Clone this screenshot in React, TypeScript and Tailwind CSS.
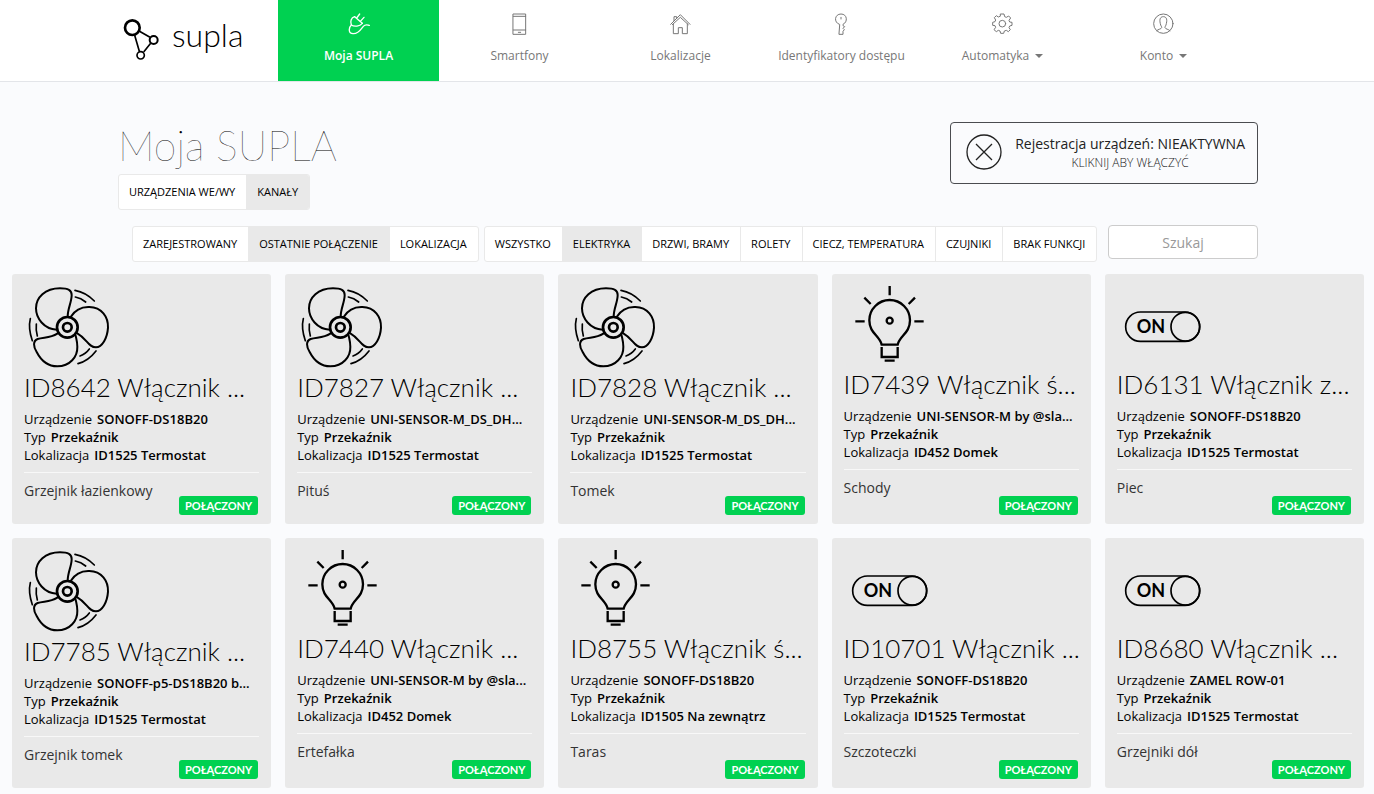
import type { ReactNode } from "react";
import clsx from "clsx";

type Glyph = "fan" | "bulb" | "toggle";

interface Channel {
  title: string;
  device: string;
  location: string;
  caption: string;
  icon: Glyph;
}

const channels: Channel[] = [
  { title: "ID8642 Włącznik ...", device: "SONOFF-DS18B20", location: "ID1525 Termostat", caption: "Grzejnik łazienkowy", icon: "fan" },
  { title: "ID7827 Włącznik ...", device: "UNI-SENSOR-M_DS_DH...", location: "ID1525 Termostat", caption: "Pituś", icon: "fan" },
  { title: "ID7828 Włącznik ...", device: "UNI-SENSOR-M_DS_DH...", location: "ID1525 Termostat", caption: "Tomek", icon: "fan" },
  { title: "ID7439 Włącznik ś...", device: "UNI-SENSOR-M by @sla...", location: "ID452 Domek", caption: "Schody", icon: "bulb" },
  { title: "ID6131 Włącznik z...", device: "SONOFF-DS18B20", location: "ID1525 Termostat", caption: "Piec", icon: "toggle" },
  { title: "ID7785 Włącznik ...", device: "SONOFF-p5-DS18B20 b...", location: "ID1525 Termostat", caption: "Grzejnik tomek", icon: "fan" },
  { title: "ID7440 Włącznik ...", device: "UNI-SENSOR-M by @sla...", location: "ID452 Domek", caption: "Ertefałka", icon: "bulb" },
  { title: "ID8755 Włącznik ś...", device: "SONOFF-DS18B20", location: "ID1505 Na zewnątrz", caption: "Taras", icon: "bulb" },
  { title: "ID10701 Włącznik ...", device: "SONOFF-DS18B20", location: "ID1525 Termostat", caption: "Szczoteczki", icon: "toggle" },
  { title: "ID8680 Włącznik ...", device: "ZAMEL ROW-01", location: "ID1525 Termostat", caption: "Grzejniki dół", icon: "toggle" },
];

function NavIcon({ children, viewBox }: { children: ReactNode; viewBox: string }) {
  return (
    <svg
      className="size-[22px]"
      viewBox={viewBox}
      fill="none"
      stroke="currentColor"
      strokeWidth="3"
      strokeLinecap="round"
      strokeLinejoin="round"
      aria-hidden="true"
    >
      {children}
    </svg>
  );
}

const plug = (
  <NavIcon viewBox="742 38 66 66">
    <g strokeWidth="4">
      <path d="M762 49 L785 69" />
      <path d="M762 49 C751 52 748 65 752 74 C761 80 777 78 785 69" />
      <path d="M768 53 L777 41 M779 63 L790 51" />
      <path d="M752 74 C744 82 742 99 757 100 C775 101 781 86 788 78 C794 71 800 74 806 75" />
    </g>
  </NavIcon>
);

const phone = (
  <NavIcon viewBox="207 37 66 66">
    <path d="M220 40 H257 V101 H220 Z M220 47 H257 M220 88 H257 M235 95 H242" />
  </NavIcon>
);

const house = (
  <NavIcon viewBox="689 38 66 66">
    <path d="M691 72 L720 43 L749 72" />
    <path d="M696 73 L720 51 L744 73" />
    <path d="M699 71 V100 H714 V82 H726 V100 H741 V71" />
    <path d="M701 61 V49 H709 V54" />
  </NavIcon>
);

const key = (
  <NavIcon viewBox="3 37 66 66">
    <path d="M28 71 C10 65 14 40 33 40 C52 40 54 64 39 71 V75 L44 78 L39 83 L43 87 L39 92 V101 H28 Z" />
    <path d="M33 50 V55" />
  </NavIcon>
);

const gear = (
  <NavIcon viewBox="485 38 66 66">
    <circle cx="516" cy="70" r="10" />
    <path d="M511 41 H521 L523 49 L528 51 L535 47 L541 53 L536 60 L538 65 L545 66 V75 L538 77 L536 82 L540 88 L534 94 L528 90 L522 92 L520 99 H511 L509 92 L504 90 L498 94 L491 88 L496 81 L494 76 L487 75 V66 L494 64 L496 59 L492 52 L498 46 L504 50 L509 48 Z" />
  </NavIcon>
);

const person = (
  <NavIcon viewBox="966 38 66 66">
    <circle cx="997" cy="70" r="29" />
    <path d="M977 91 C982 86 990 87 992 82 C993 79 989 77 988 70 C984 54 990 49 997 49 C1004 49 1010 54 1006 70 C1005 77 1001 79 1002 82 C1004 87 1012 86 1017 91" />
  </NavIcon>
);

const nav = [
  { label: "Moja SUPLA", icon: plug, active: true },
  { label: "Smartfony", icon: phone },
  { label: "Lokalizacje", icon: house },
  { label: "Identyfikatory dostępu", icon: key },
  { label: "Automatyka", icon: gear, menu: true },
  { label: "Konto", icon: person, menu: true },
];

function ChannelIcon({ icon }: { icon: Glyph }) {
  if (icon === "fan") {
    return (
      <svg className="size-[87px]" viewBox="72 63 261 261" fill="none" stroke="black" strokeWidth="6" strokeLinecap="round" aria-hidden="true">
        <circle cx="202" cy="187" r="13" strokeWidth="8" />
        <circle cx="202" cy="187" r="31" strokeWidth="8" />
        <path d="M203 155 C203 130 215 112 215 90 C215 75 205 70 180 70 C135 70 108 98 108 130 C108 160 132 192 170 194" />
        <path d="M212 156 C225 135 245 125 268 126 C305 127 325 155 324 188 C322 220 306 247 288 247 C265 247 262 222 232 205" />
        <path d="M172 206 C150 220 130 216 113 222 C98 228 100 245 110 261 C125 290 147 304 172 304 C210 304 233 275 232 245 C232 230 229 222 227 212" />
        <path
          strokeWidth="5"
          d="M225 76 Q258 82 283 108 M226 96 Q243 99 257 111 M91 161 Q84 190 97 227 M109 177 Q107 195 112 213 M234 296 Q265 288 288 258 M240 273 Q257 267 268 252"
        />
      </svg>
    );
  }
  if (icon === "bulb") {
    return (
      <svg className="size-[84px]" viewBox="42 63 252 252" fill="none" stroke="black" strokeWidth="7" aria-hidden="true">
        <path d="M155 239 C149 212 118 205 118 166 A61 61 0 0 1 240 166 C240 205 209 212 203 239 Z" />
        <circle cx="179" cy="167" r="9" />
        <path d="M155 246 V276 H203 V246 M164 287 H194" />
        <path d="M179 63 V91 M103 98 L122 117 M255 98 L236 117 M76 169 H104 M253 169 H281" />
      </svg>
    );
  }
  return (
    <svg className="size-[84px]" viewBox="66 63 252 252" fill="none" stroke="black" strokeWidth="5" aria-hidden="true">
      <rect x="92" y="141" width="222" height="88" rx="44" />
      <circle cx="271" cy="185" r="43" />
      <text x="168" y="204" textAnchor="middle" fontFamily="Lato, sans-serif" fontWeight="700" fontSize="54" fill="black" stroke="none">
        ON
      </text>
    </svg>
  );
}

function ButtonGroup({ items, selected }: { items: string[]; selected: string }) {
  return (
    <div className="flex h-9 overflow-hidden rounded-[3px] border border-[#e9e9e9] bg-white">
      {items.map((item, i) => (
        <button
          key={item}
          type="button"
          aria-pressed={item === selected}
          className={clsx(
            "pr-[11px] pl-2.5 text-[11px] whitespace-nowrap uppercase",
            i > 0 && "border-l border-[#e9e9e9]",
            item === selected && "bg-[#e9e9e9]",
          )}
        >
          {item}
        </button>
      ))}
    </div>
  );
}

function ChannelCard({ channel }: { channel: Channel }) {
  return (
    <article className="flex min-h-[250px] min-w-0 flex-col rounded-[3px] bg-[#e9e9e9] px-3 pt-3 pb-[9px]">
      <ChannelIcon icon={channel.icon} />
      <h2 className="font-[Lato] text-[26px] leading-7 font-light whitespace-nowrap">{channel.title}</h2>
      <dl className="mt-[9px] text-[13px] leading-[18px]">
        {[
          ["Urządzenie", channel.device],
          ["Typ", "Przekaźnik"],
          ["Lokalizacja", channel.location],
        ].map(([name, value]) => (
          <div key={name} className="flex gap-[5px] whitespace-nowrap">
            <dt>{name}</dt>
            <dd className="font-semibold">{value}</dd>
          </div>
        ))}
      </dl>
      <hr className="mt-2 border-[#f8f8f8]" />
      <div className="flex flex-1 justify-between">
        <p className="mt-2 text-sm leading-5 text-[#333]">{channel.caption}</p>
        <span className="mr-px self-end rounded-[3px] bg-[#00d151] px-1.5 font-[Lato] text-[11px] leading-[19px] font-bold text-white">
          POŁĄCZONY
        </span>
      </div>
    </article>
  );
}

export default function App() {
  return (
    <div className="min-h-screen bg-[#fafbfd] font-['Open_Sans',sans-serif] text-black">
      <header className="border-b border-[#e3e5e9] bg-white">
        <div className="mx-auto grid max-w-[1140px] grid-cols-7 pr-[13px]">
          <a href="#home" className="flex items-start gap-[11px] pt-[18px] pl-1.5" aria-label="supla">
            <svg className="h-[43px] w-[38px]" viewBox="70 54 114 129" fill="none" stroke="black" aria-hidden="true">
              <path strokeWidth="5" d="M118 93 L151 112 M105 106 L119 154 M153 130 L132 156" />
              <circle cx="98" cy="83" r="22" strokeWidth="8" />
              <circle cx="162" cy="120" r="12" strokeWidth="6" />
              <circle cx="123" cy="166" r="11" strokeWidth="5" />
            </svg>
            <span className="font-[Lato] text-[32px] leading-[34px] font-light">supla</span>
          </a>
          <nav className="col-span-6 grid grid-cols-6">
            {nav.map((item) => (
              <a
                key={item.label}
                href="#"
                className={clsx(
                  "flex h-[81px] flex-col items-center gap-[11px] pt-[13px] text-xs leading-5 whitespace-nowrap",
                  item.active ? "bg-[#00d151] font-semibold text-white" : "text-[#777]",
                )}
              >
                {item.icon}
                <span className="flex items-center gap-1.5">
                  {item.label}
                  {item.menu && (
                    <svg className="h-1 w-2" viewBox="0 0 8 4" fill="currentColor" aria-hidden="true">
                      <path d="M0 0 H8 L4 4 Z" />
                    </svg>
                  )}
                </span>
              </a>
            ))}
          </nav>
        </div>
      </header>

      <main>
        <div className="mx-auto flex max-w-[1142px] items-start justify-between pt-10 pl-0.5">
          <div>
            <h1 className="mb-1 font-[Lato] text-[41px] leading-[48px] font-thin">Moja SUPLA</h1>
            <div className="flex">
              <ButtonGroup items={["Urządzenia WE/WY", "Kanały"]} selected="Kanały" />
            </div>
          </div>
          <button type="button" className="flex h-[62px] items-center gap-2.5 rounded border border-[#4a4c50] px-3 text-[#222]">
            <svg className="mb-0.5 size-[42px]" viewBox="0 0 42 42" fill="none" stroke="currentColor" aria-hidden="true">
              <circle cx="21" cy="21" r="17" strokeWidth="1.3" />
              <path d="M13 13 L29 29 M29 13 L13 29" strokeWidth="1.3" />
            </svg>
            <span className="flex flex-col items-center pt-0.5">
              <span className="text-sm leading-[18px]">Rejestracja urządzeń: NIEAKTYWNA</span>
              <span className="text-xs leading-5 font-light">KLIKNIJ ABY WŁĄCZYĆ</span>
            </span>
          </button>
        </div>

        <div className="mx-auto mt-[15px] flex max-w-[1142px] gap-[5px] pl-4">
          <div className="pt-px">
            <ButtonGroup items={["Zarejestrowany", "Ostatnie połączenie", "Lokalizacja"]} selected="Ostatnie połączenie" />
          </div>
          <div className="pt-px">
            <ButtonGroup
              items={["Wszystko", "Elektryka", "Drzwi, bramy", "Rolety", "Ciecz, temperatura", "Czujniki", "Brak funkcji"]}
              selected="Elektryka"
            />
          </div>
          <input
            type="text"
            aria-label="Szukaj"
            placeholder="Szukaj"
            className="ml-auto h-[34px] w-[150px] rounded border border-[#ccc] bg-white text-center text-sm placeholder:text-[#999]"
          />
        </div>

        <section aria-label="Kanały" className="mt-3 grid grid-cols-5 gap-3.5 pr-2.5 pb-1.5 pl-3">
          {channels.map((channel) => (
            <ChannelCard key={channel.title} channel={channel} />
          ))}
        </section>
      </main>
    </div>
  );
}
